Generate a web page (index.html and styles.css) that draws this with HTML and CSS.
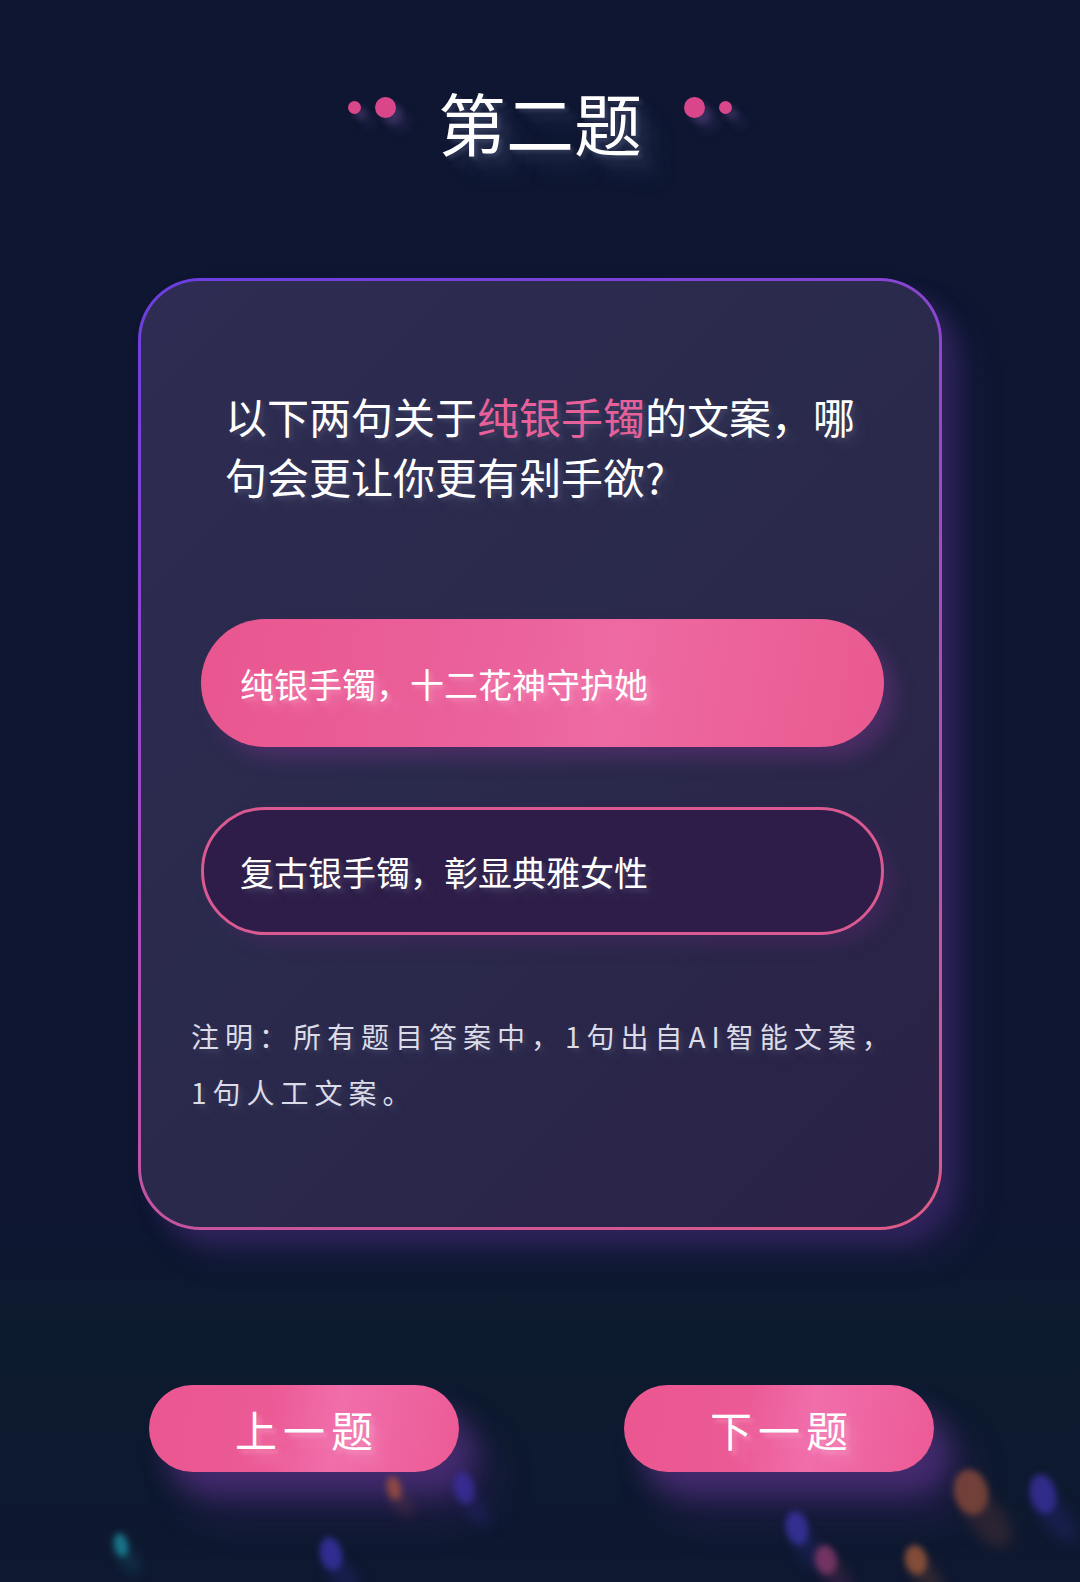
FILE: index.html
```html
<!DOCTYPE html>
<html lang="zh-CN">
<head>
    <meta charset="UTF-8">
    <meta name="viewport" content="width=device-width, initial-scale=1.0">
    <title>第二题</title>
    <link rel="stylesheet" href="styles.css">
</head>
<body>
    <div class="page">
        <header class="heading">
            <span class="dots"><i class="dot dot-sm"></i><i class="dot dot-lg"></i></span>
            <h1>第二题</h1>
            <span class="dots"><i class="dot dot-lg"></i><i class="dot dot-sm"></i></span>
        </header>

        <section class="card">
            <p class="question">以下两句关于<span class="hl">纯银手镯</span>的文案，哪句会更让你更有剁手欲?</p>
            <div class="options">
                <button class="option selected">纯银手镯，十二花神守护她</button>
                <button class="option">复古银手镯，彰显典雅女性</button>
            </div>
            <p class="note">注明：所有题目答案中，1句出自AI智能文案，1句人工文案。</p>
        </section>

        <nav class="pager">
            <button class="pager-btn">上一题</button>
            <button class="pager-btn">下一题</button>
        </nav>

        <!-- floating light spots at the bottom -->
        <div class="bokeh">
            <span class="spot spot-1"></span>
            <span class="spot spot-2"></span>
            <span class="spot spot-3"></span>
            <span class="spot spot-4"></span>
            <span class="spot spot-5"></span>
            <span class="spot spot-6"></span>
            <span class="spot spot-7"></span>
            <span class="spot spot-8"></span>
            <span class="spot spot-9"></span>
        </div>
    </div>
</body>
</html>
```

FILE: styles.css
```css
* {
    box-sizing: border-box;
}

body {
    margin: 0;
    background-color: #0e1631;
    font-family: "Noto Sans CJK SC", "Noto Sans", sans-serif;
    color: #ffffff;
}

.page {
    position: relative;
    width: 1080px;
    height: 1582px;
    overflow: hidden;
    background: linear-gradient(180deg, #0e1631 0%, #0e1631 77%, #0d1b2e 84%, #0e1830 100%);
}

/* title with the pink dots */
.heading {
    display: flex;
    justify-content: center;
    align-items: center;
    gap: 42px;
    padding-top: 82px;
}

.heading h1 {
    margin: 0;
    font-size: 68px;
    font-weight: 400;
    line-height: 80px;
    text-shadow: 3px 3px 4px rgba(150, 160, 200, 0.25),
                 10px 10px 8px rgba(120, 130, 170, 0.18),
                 18px 18px 12px rgba(110, 120, 160, 0.12),
                 28px 28px 16px rgba(100, 110, 150, 0.08);
}

.dots {
    display: flex;
    align-items: center;
    gap: 14px;
    margin-top: -30px;
}

.dot {
    display: block;
    border-radius: 50%;
    background-color: #d9478a;
    box-shadow: 6px 6px 6px rgba(120, 90, 160, 0.35), 14px 14px 10px rgba(90, 70, 140, 0.2);
}

.dot-sm {
    width: 13px;
    height: 13px;
}

.dot-lg {
    width: 21px;
    height: 21px;
}

/* question card */
.card {
    width: 804px;
    height: 952px;
    margin: 116px 0 0 138px;
    border: 3px solid transparent;
    border-radius: 62px;
    background: linear-gradient(135deg, #2e2c52 0%, #2a2a4c 45%, #2a2246 100%) padding-box,
                linear-gradient(160deg, #6a3ee2 0%, #a24bc2 45%, #de5b86 100%) border-box;
    box-shadow: 14px 14px 20px rgba(80, 50, 130, 0.4),
                30px 30px 30px rgba(60, 40, 110, 0.25);
}

.question {
    width: 650px;
    margin: 105px 0 0 84px;
    font-size: 42px;
    line-height: 60px;
    text-shadow: 3px 3px 4px rgba(140, 150, 180, 0.22),
                 9px 9px 8px rgba(110, 120, 150, 0.14);
}

.hl {
    color: #e8609a;
}

.options {
    display: flex;
    flex-direction: column;
    gap: 60px;
    margin: 113px 0 0 60px;
}

.option {
    width: 683px;
    height: 128px;
    padding: 0 0 0 36px;
    border: 3px solid #d95990;
    border-radius: 64px;
    background-color: #2d1d48;
    color: #ffffff;
    font-family: inherit;
    font-size: 34px;
    text-align: left;
    cursor: pointer;
    text-shadow: 3px 3px 4px rgba(140, 150, 180, 0.25),
                 9px 9px 8px rgba(110, 120, 150, 0.15);
    box-shadow: 10px 10px 16px rgba(90, 40, 110, 0.35);
}

.option.selected {
    border: none;
    padding-left: 39px;
    background: linear-gradient(100deg, #e9568f 0%, #eb629c 45%, #ee6aa2 60%, #e9598f 100%);
    text-shadow: 3px 3px 4px rgba(255, 190, 220, 0.35),
                 10px 10px 8px rgba(255, 170, 210, 0.25);
    box-shadow: 12px 12px 18px rgba(110, 50, 130, 0.45);
}

.note {
    width: 716px;
    margin: 73px 0 0 50px;
    font-size: 28px;
    line-height: 56px;
    letter-spacing: 6px;
    color: #dcdce8;
    text-shadow: 3px 3px 4px rgba(130, 140, 170, 0.2),
                 8px 8px 8px rgba(110, 120, 150, 0.12);
}

/* previous / next */
.pager {
    display: flex;
    gap: 165px;
    margin-top: 155px;
    padding-left: 149px;
}

.pager-btn {
    width: 310px;
    height: 87px;
    border: none;
    border-radius: 44px;
    background: linear-gradient(100deg, #ea5690 0%, #ec5b96 40%, #f06eab 60%, #ec5a95 100%);
    color: #ffffff;
    font-family: inherit;
    font-size: 42px;
    letter-spacing: 6px;
    text-indent: 6px;
    cursor: pointer;
    text-shadow: 4px 4px 4px rgba(255, 200, 225, 0.35),
                 12px 12px 8px rgba(255, 170, 210, 0.25);
    box-shadow: 16px 22px 26px rgba(110, 60, 160, 0.45),
                34px 44px 40px rgba(80, 40, 130, 0.3);
}

.bokeh {
    position: absolute;
    left: 0;
    right: 0;
    bottom: 0;
    height: 140px;
    pointer-events: none;
}

.spot {
    position: absolute;
    border-radius: 50%;
    filter: blur(3px);
    transform: rotate(-12deg);
    opacity: 0.8;
}

/* faint trail behind each spot */
.spot::after {
    content: "";
    position: absolute;
    left: 30%;
    top: 40%;
    width: 100%;
    height: 150%;
    border-radius: 50%;
    background: inherit;
    opacity: 0.3;
    filter: blur(6px);
    transform: rotate(-25deg);
}

.spot-1 { left: 387px; top: 34px; width: 14px; height: 24px; background: #a4513c; }
.spot-2 { left: 454px; top: 30px; width: 20px; height: 32px; background: #3b2ea0; }
.spot-3 { left: 320px; top: 95px; width: 22px; height: 34px; background: #3a32a8; }
.spot-4 { left: 114px; top: 91px; width: 14px; height: 24px; background: #1b8aa0; }
.spot-5 { left: 786px; top: 69px; width: 22px; height: 34px; background: #3c35a8; }
.spot-6 { left: 815px; top: 103px; width: 22px; height: 30px; background: #8a3a6a; }
.spot-7 { left: 905px; top: 103px; width: 22px; height: 30px; background: #a05a3a; }
.spot-8 { left: 954px; top: 27px; width: 34px; height: 46px; background: #8a4a3a; }
.spot-9 { left: 1030px; top: 32px; width: 26px; height: 40px; background: #3a30a0; }
```
